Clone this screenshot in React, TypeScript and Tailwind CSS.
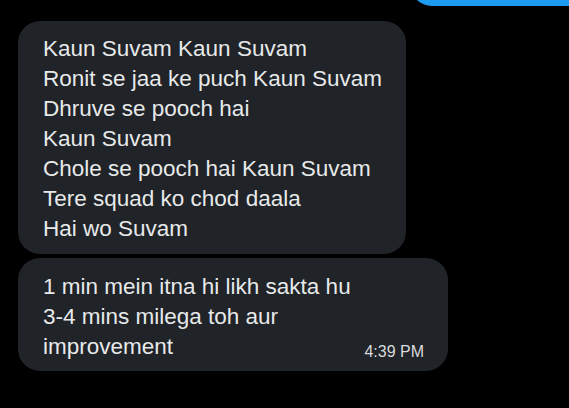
const lines = [
  "Kaun Suvam Kaun Suvam",
  "Ronit se jaa ke puch Kaun Suvam",
  "Dhruve se pooch hai",
  "Kaun Suvam",
  "Chole se pooch hai Kaun Suvam",
  "Tere squad ko chod daala",
  "Hai wo Suvam",
];

const App = () => {
  return (
    <div
      className="w-full h-[408px] bg-black overflow-hidden"
      style={{ fontFamily: '"Liberation Sans", Arial, sans-serif' }}
    >
      {/* tail of the previous sent message */}
      <div className="flex justify-end items-end h-[6px] overflow-hidden">
        <div className="w-[159px] h-[40px] shrink-0 rounded-bl-[22px] bg-[#1d9bf0]" />
      </div>

      <div className="flex flex-col gap-[4px] pl-[18px] pt-[15px]">
        <div className="w-fit rounded-[22px] bg-[#202327] pl-[25px] pr-[24px] pt-[13px] pb-[10px] text-[22.5px] leading-[30px] text-[#e7e9ea]">
          {lines.map((l) => (
            <div key={l}>{l}</div>
          ))}
        </div>

        <div className="w-[430px] rounded-[22px] bg-[#202327] pl-[25px] pr-[24px] pt-[14px] pb-[9px] text-[22.5px] leading-[30px] text-[#e7e9ea]">
          <div>1 min mein itna hi likh sakta hu</div>
          <div>3-4 mins milega toh aur</div>
          <div className="flex justify-between items-end">
            <span>improvement</span>
            <span className="text-[16px] leading-[20px] text-[#d9dbdc]">4:39 PM</span>
          </div>
        </div>
      </div>
    </div>
  );
};

export default App;
